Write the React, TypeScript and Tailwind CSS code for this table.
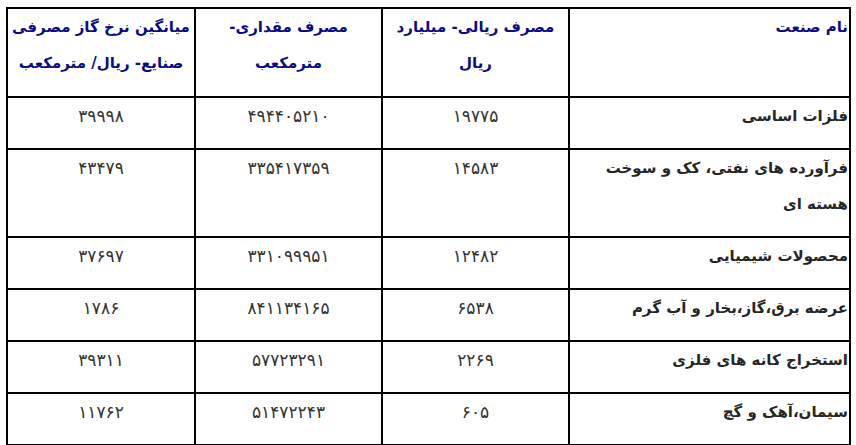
const headers = [
  ["نام صنعت"],
  ["مصرف ریالی- میلیارد", "ریال"],
  ["مصرف مقداری-", "مترمکعب"],
  ["میانگین نرخ گاز مصرفی", "صنایع- ریال/ مترمکعب"],
];

const rows: { name: string[]; rial: string; volume: string; rate: string }[] = [
  { name: ["فلزات اساسی"], rial: "۱۹۷۷۵", volume: "۴۹۴۴۰۵۲۱۰", rate: "۳۹۹۹۸" },
  { name: ["فرآورده های نفتی، کک و سوخت", "هسته ای"], rial: "۱۴۵۸۳", volume: "۳۳۵۴۱۷۳۵۹", rate: "۴۳۴۷۹" },
  { name: ["محصولات شیمیایی"], rial: "۱۲۴۸۲", volume: "۳۳۱۰۹۹۹۵۱", rate: "۳۷۶۹۷" },
  { name: ["عرضه برق،گاز،بخار و آب گرم"], rial: "۶۵۳۸", volume: "۸۴۱۱۳۴۱۶۵", rate: "۱۷۸۶" },
  { name: ["استخراج کانه های فلزی"], rial: "۲۲۶۹", volume: "۵۷۷۲۳۲۹۱", rate: "۳۹۳۱۱" },
  { name: ["سیمان،آهک و گچ"], rial: "۶۰۵", volume: "۵۱۴۷۲۲۴۳", rate: "۱۱۷۶۲" },
];

function Lines({ lines }: { lines: string[] }) {
  return (
    <>
      {lines.map((l, i) => (
        <div key={i} className="whitespace-nowrap">
          {l}
        </div>
      ))}
    </>
  );
}

const cell = "border-2 border-black align-top pt-0 pb-[14px]";
const num = `${cell} text-center text-[17px] text-[#333]`;

export default function App() {
  return (
    <div className="bg-white min-h-[445px] pt-[7px] pl-[6px] pr-[7px] overflow-hidden">
      <table
        dir="rtl"
        className="w-[843px] table-fixed border-collapse text-[15px] leading-[36px]"
        style={{ fontFamily: '"DejaVu Sans", sans-serif' }}
      >
        <colgroup>
          <col className="w-[281px]" />
          <col className="w-[187px]" />
          <col className="w-[187px]" />
          <col className="w-[188px]" />
        </colgroup>
        <thead>
          <tr>
            {headers.map((h, i) => (
              <th
                key={i}
                className={`border-2 border-black align-top pt-0 pb-[15px] px-[1px] font-bold text-[#0c0c80] ${
                  i === 0 ? "text-right" : "text-center"
                }`}
              >
                <Lines lines={h} />
              </th>
            ))}
          </tr>
        </thead>
        <tbody>
          {rows.map((r) => (
            <tr key={r.rial}>
              <td className={`${cell} px-[1px] text-right font-bold text-[#262626]`}>
                <Lines lines={r.name} />
              </td>
              <td className={num}>{r.rial}</td>
              <td className={num}>{r.volume}</td>
              <td className={num}>{r.rate}</td>
            </tr>
          ))}
        </tbody>
      </table>
    </div>
  );
}
